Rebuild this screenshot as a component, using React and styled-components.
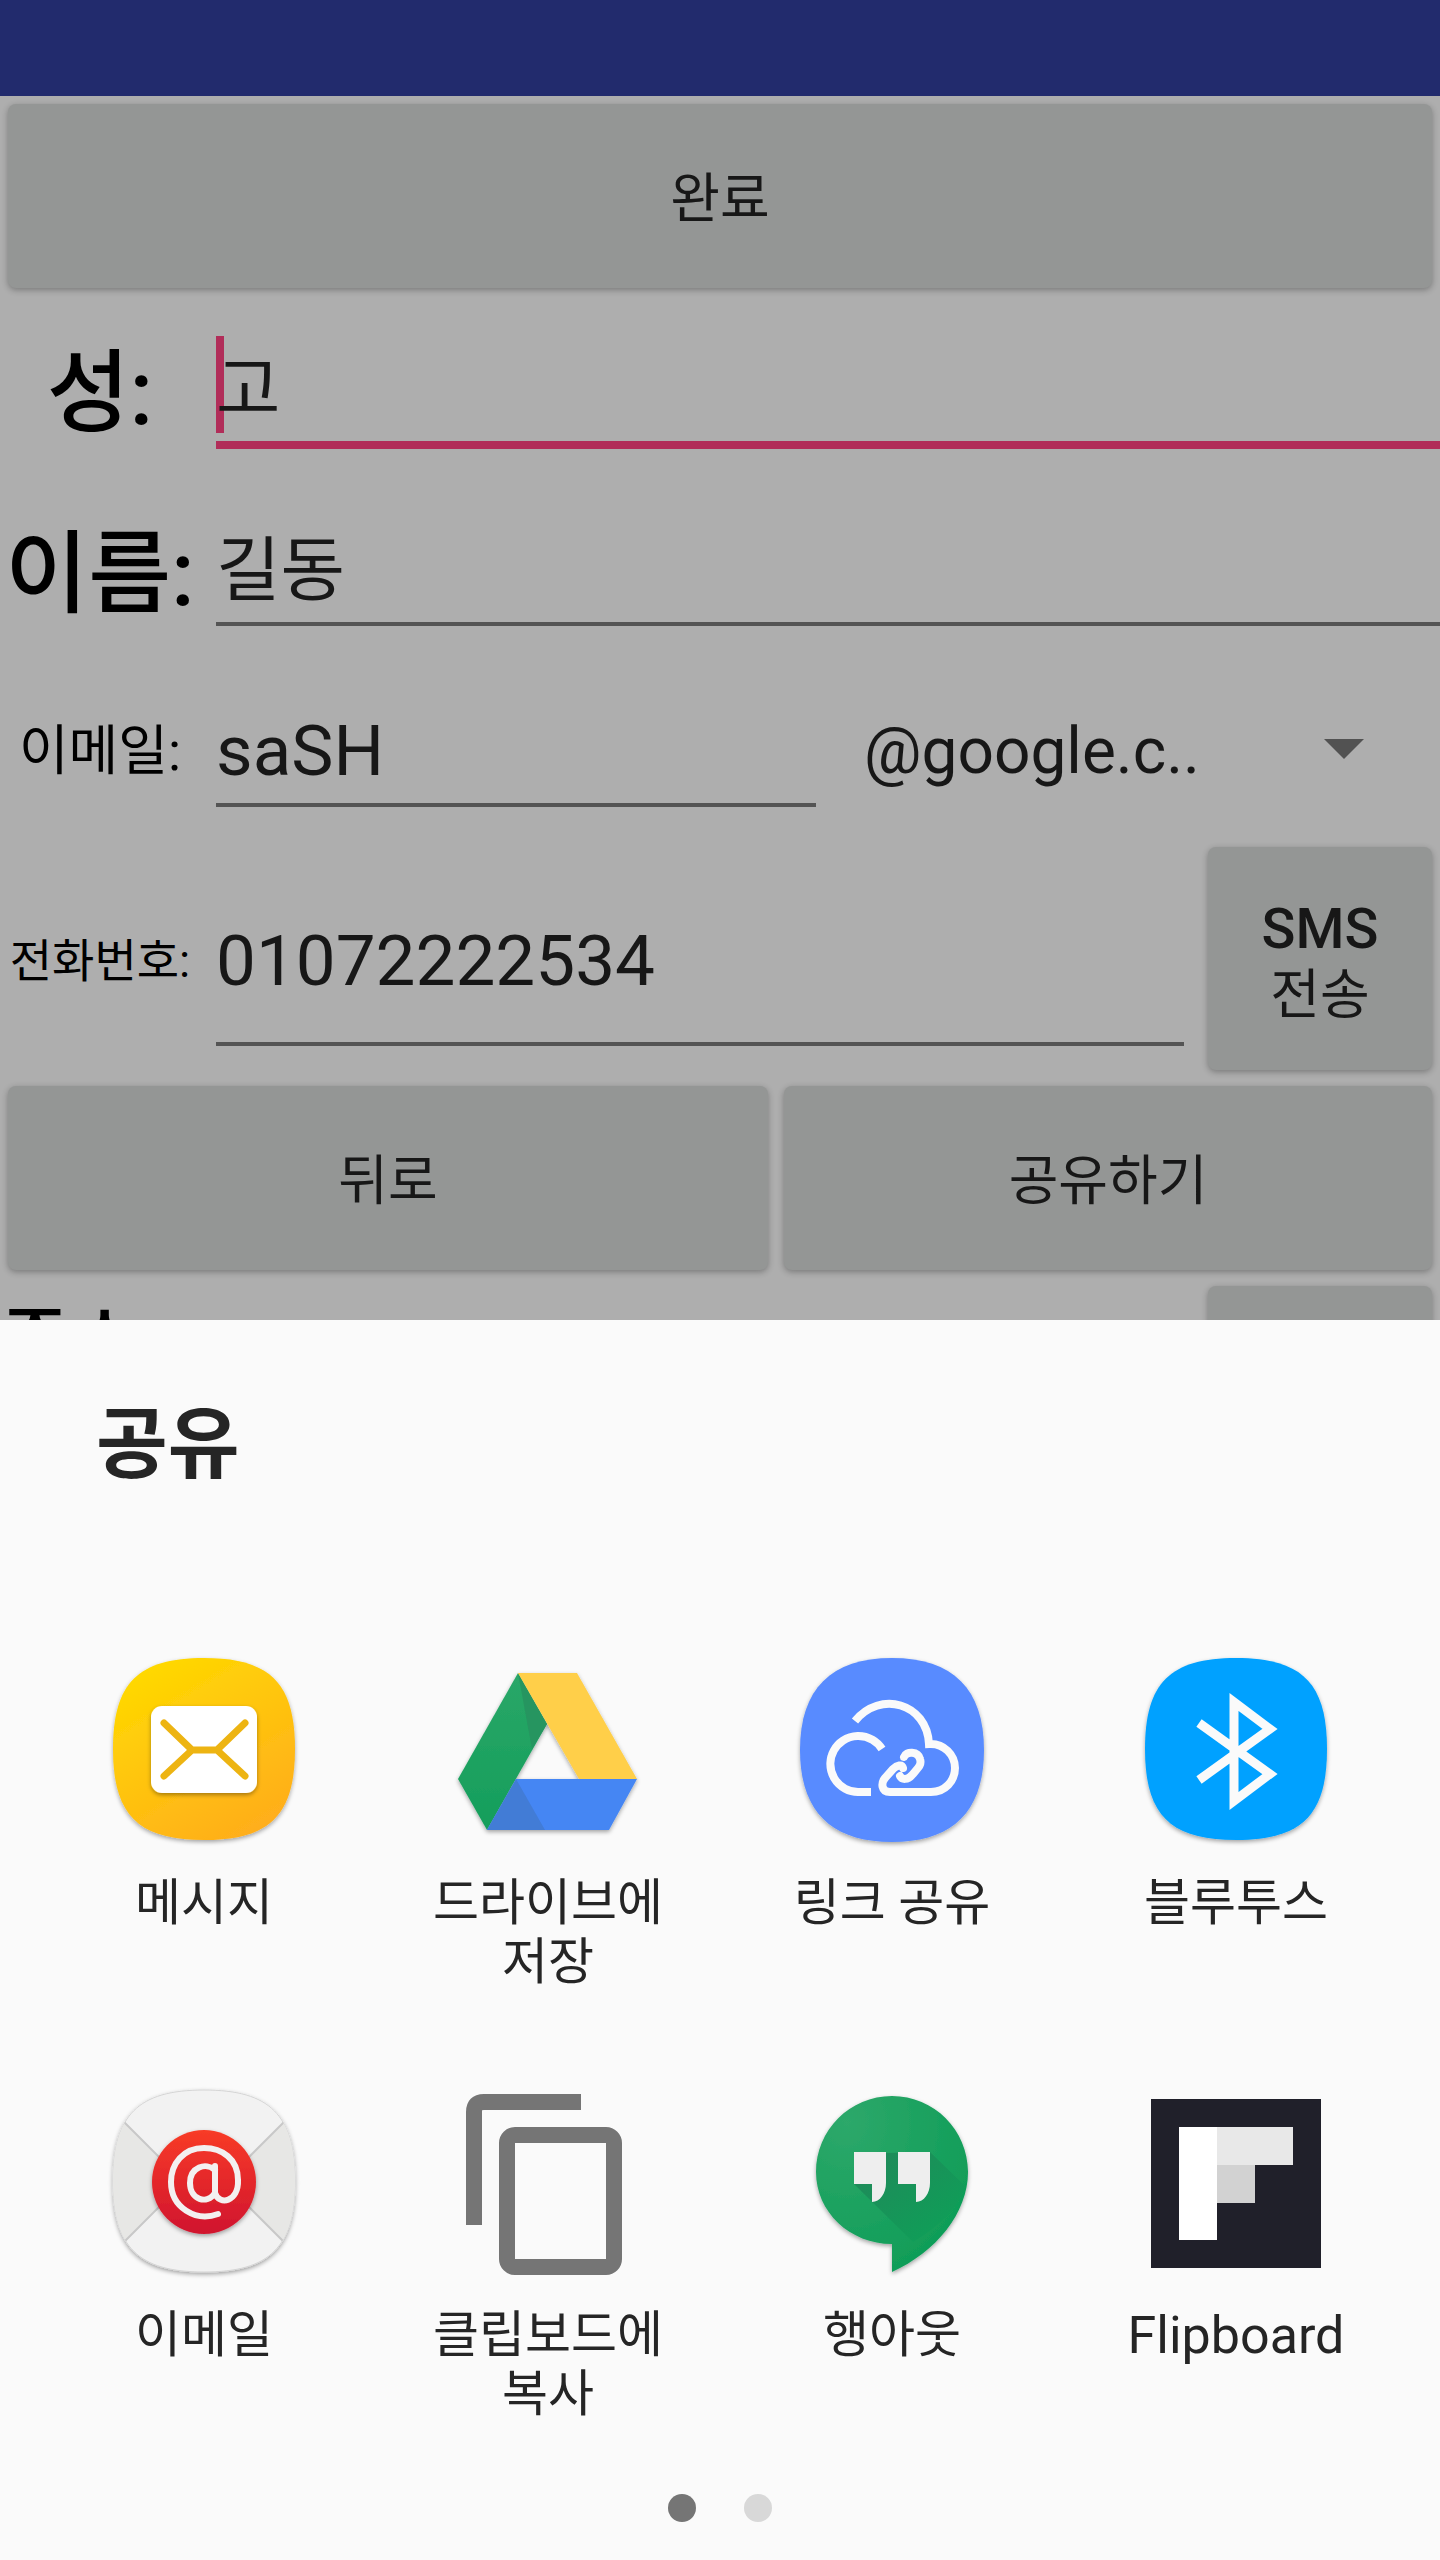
import React from 'react';
import styled, { createGlobalStyle, css } from 'styled-components';

const Global = createGlobalStyle`
  *, *::before, *::after { box-sizing: border-box; }
  body { margin: 0; background: #fafafa; }
  button, input, select { font: inherit; color: inherit; }
`;

const Screen = styled.div`
  display: flex;
  flex-direction: column;
  height: 100vh;
  background: #aeaeae;
  color: #171717;
  font-family: Roboto, 'Noto Sans CJK KR', sans-serif;
`;

const StatusBar = styled.header`
  flex: none;
  height: 96px;
  background: #222b6d;
`;

const Form = styled.form`
  flex: 1 1 0;
  min-height: 0;
  overflow: hidden;
`;

const Row = styled.div`
  display: flex;
  align-items: stretch;
  height: ${(p) => p.$height || 181}px;
`;

const ButtonRow = styled.div`
  display: flex;
  gap: 16px;
  height: 200px;
  padding: 8px;
`;

const FormButton = styled.button`
  flex: ${(p) => p.$grow || 1} 1 0;
  padding: 8px 0 0;
  border: 0;
  border-radius: 8px;
  background: #949695;
  box-shadow: 0 2px 6px rgba(0, 0, 0, 0.3);
  font-size: 54px;
  line-height: 66px;
`;

const SideButton = styled(FormButton)`
  flex: none;
  width: 224px;
  margin: 8px 8px 8px 24px;
`;

const Latin = styled.span`
  font-size: 56px;
  font-weight: 500;
`;

const Label = styled.label`
  flex: none;
  display: flex;
  align-items: center;
  justify-content: ${(p) => (p.$start ? 'flex-start' : 'center')};
  width: 200px;
  padding-bottom: 4px;
  color: #000;
  font-size: ${(p) => p.$size}px;
  font-weight: ${(p) => (p.$size > 60 ? 500 : 400)};
  white-space: nowrap;
`;

const Field = styled.div`
  position: relative;
  flex: 25 1 0;
  min-width: 0;
  display: flex;
  margin: 0 0 ${(p) => (p.$focused ? 28 : 32)}px 16px;
`;

const TextInput = styled.input`
  position: relative;
  width: 100%;
  min-width: 0;
  padding: ${(p) => (p.$latin ? 40 : 30)}px 0 0;
  border: 0;
  border-bottom: 4px solid #545454;
  border-radius: 0;
  outline: 0;
  background: transparent;
  font-size: ${(p) => (p.$latin ? 71 : 70)}px;
  ${(p) => p.$focused && css`
    border-bottom: 8px solid #b12d59;
  `}
`;

const Caret = styled.span`
  position: absolute;
  left: 0;
  top: 40px;
  width: 8px;
  height: 97px;
  background: #b12d59;
`;

const Picker = styled.div`
  flex: 26 1 0;
  min-width: 0;
  display: flex;
  align-items: center;
`;

const Select = styled.select`
  flex: 1;
  min-width: 0;
  padding: 6px 0 0 48px;
  border: 0;
  outline: 0;
  background: transparent;
  appearance: none;
  font-size: 64px;
`;

const Arrow = styled.svg`
  flex: none;
  width: 40px;
  height: 20px;
  margin-right: 76px;
`;

const Sheet = styled.section`
  flex: none;
  background: #fafafa;
  color: #252525;
`;

const Title = styled.h1`
  margin: 0;
  padding: 78px 96px 0;
  font-size: 78px;
  line-height: 96px;
  font-weight: 700;
`;

const Targets = styled.div`
  display: grid;
  grid-template-columns: repeat(4, 1fr);
  row-gap: 32px;
  padding: 152px 32px 0;
`;

const Target = styled.button`
  display: flex;
  flex-direction: column;
  align-items: center;
  height: 400px;
  padding: 0;
  border: 0;
  background: none;
  font-size: ${(p) => (p.$latin ? 52 : 50)}px;
  line-height: 59px;
`;

const TargetIcon = styled.svg`
  display: block;
  width: 208px;
  height: 208px;
  margin-bottom: 20px;
`;

const TargetName = styled.span`
  max-width: 250px;
  word-break: keep-all;
`;

const Pages = styled.nav`
  display: flex;
  justify-content: center;
  gap: 48px;
  padding: 16px 0 38px;
`;

const PageDot = styled.button`
  width: 28px;
  height: 28px;
  padding: 0;
  border: 0;
  border-radius: 50%;
  background: ${(p) => (p.$active ? '#757575' : '#d8d8d8')};
`;

/* Rounded tiles shared by the stock app icons, centred in a 208 box */
const TILE = 'M104 12C170 12 195 37 195 103C195 169 170 194 104 194C38 194 13 169 13 103C13 37 38 12 104 12Z';
const WIDE_TILE = 'M104 12C165 12 196 43 196 104C196 165 165 196 104 196C43 196 12 165 12 104C12 43 43 12 104 12Z';

const Shadow = ({ id }) => (
  <filter id={id} x="-10%" y="-10%" width="120%" height="125%">
    <feDropShadow dx="0" dy="2" stdDeviation="2" floodColor="#000" floodOpacity="0.35" />
  </filter>
);

const Message = () => (
  <TargetIcon viewBox="0 0 208 208" aria-hidden="true">
    <defs>
      <Shadow id="ms" />
      <linearGradient id="mg" x1="0.2" y1="0" x2="0.8" y2="1">
        <stop offset="0" stopColor="#ffda00" />
        <stop offset="1" stopColor="#ffac1c" />
      </linearGradient>
    </defs>
    <path d={TILE} fill="url(#mg)" filter="url(#ms)" />
    <rect x="51" y="60" width="106" height="87" rx="11" fill="#fff" filter="url(#ms)" />
    <path d="M64 77L92 104L64 130M145 77L117 104L145 130M92 104H117" fill="none" stroke="#edb412" strokeWidth="7" strokeLinecap="round" />
  </TargetIcon>
);

const Drive = () => (
  <TargetIcon viewBox="0 0 208 208" aria-hidden="true">
    <defs>
      <Shadow id="ds" />
      <linearGradient id="dg" x1="0" y1="0" x2="0" y2="1">
        <stop offset="0" stopColor="#2aa768" />
        <stop offset="1" stopColor="#149e5b" />
      </linearGradient>
    </defs>
    <g filter="url(#ds)">
      <path d="M74 27L103 78L43 184L14 133Z" fill="url(#dg)" />
      <path d="M74 27L103 78L88 103Z" fill="#269560" />
      <path d="M74 27H133L193 133H135Z" fill="#ffcf4a" />
      <path d="M72 133H193L165 184H43Z" fill="#4586f3" />
      <path d="M72 133L101 184H43Z" fill="#427bd6" />
    </g>
  </TargetIcon>
);

const LinkShare = () => (
  <TargetIcon viewBox="0 0 208 208" aria-hidden="true">
    <defs><Shadow id="ls" /></defs>
    <path d={WIDE_TILE} fill="#588bff" filter="url(#ls)" />
    <g fill="none" stroke="#fafafa" strokeWidth="8">
      <path d="M67 75C92 44 139 57 141 98C156 97 167 109 167 122C167 135 157 146 143 146H102" />
      <path d="M102 146C93 146 93 137 97 132L105 123C109 119 114 118 115 122" strokeLinecap="round" />
      <path d="M94 103A28 28 0 1 0 70 146H83" />
      <path d="M116 111C118 105 130 105 132 113C134 119 130 122 124 129C120 134 114 134 112 130" strokeLinecap="round" />
    </g>
  </TargetIcon>
);

const Bluetooth = () => (
  <TargetIcon viewBox="0 0 208 208" aria-hidden="true">
    <defs><Shadow id="bs" /></defs>
    <path d={TILE} fill="#00a1ff" filter="url(#bs)" />
    <path d="M67 77L138 128L102 155V56L138 83L67 134" fill="none" stroke="#fafafa" strokeWidth="9" />
  </TargetIcon>
);

const Email = () => (
  <TargetIcon viewBox="0 0 208 208" aria-hidden="true">
    <defs>
      <Shadow id="es" />
      <linearGradient id="eg" x1="0" y1="0" x2="0" y2="1">
        <stop offset="0" stopColor="#f83b27" />
        <stop offset="1" stopColor="#d0142f" />
      </linearGradient>
      <clipPath id="ec"><path d={TILE} /></clipPath>
    </defs>
    <path d={TILE} fill="#f2f2f2" stroke="#d5d5d5" filter="url(#es)" />
    <g clipPath="url(#ec)">
      <path d="M10 30L84 104L10 178ZM198 30L124 104L198 178Z" fill="#e7e7e5" />
      <path d="M23 43L84 104L23 165M185 43L124 104L185 165" fill="none" stroke="#c8c8c8" strokeWidth="2" />
    </g>
    <circle cx="104" cy="104" r="52" fill="url(#eg)" filter="url(#es)" />
    <path d="M115 88V115C119 128 139 124 138 102C138 81 122 70 104 70C83 70 71 86 71 104C71 130 96 144 118 136M115 92C106 84 90 89 90 105C90 122 107 127 115 115" fill="none" stroke="#f3f0f0" strokeWidth="6" strokeLinecap="round" />
  </TargetIcon>
);

const Copy = () => (
  <TargetIcon viewBox="0 0 208 208" aria-hidden="true">
    <path d="M137 24H40C33 24 30 27 30 34V147" fill="none" stroke="#757575" strokeWidth="16" />
    <rect x="63" y="57" width="107" height="132" rx="8" fill="none" stroke="#757575" strokeWidth="16" />
  </TargetIcon>
);

const Hangouts = () => (
  <TargetIcon viewBox="0 0 208 208" aria-hidden="true">
    <defs>
      <Shadow id="hs" />
      <radialGradient id="hg" cx="0.2" cy="0.15" r="0.9">
        <stop offset="0" stopColor="#2da86a" />
        <stop offset="1" stopColor="#109d58" />
      </radialGradient>
      <linearGradient id="hh" x1="0" y1="0" x2="1" y2="1">
        <stop offset="0" stopColor="#22875a" />
        <stop offset="0.8" stopColor="#109d58" />
      </linearGradient>
    </defs>
    <path d="M104 18C146 18 180 52 180 94C180 135 148 174 104 194V166C62 166 28 134 28 94C28 52 62 18 104 18Z" fill="url(#hg)" filter="url(#hs)" />
    <path d="M66 106L125 164C155 146 172 127 177 108L142 74L98 75Z" fill="url(#hh)" />
    <path d="M66 74H98V105C98 115 92 124 84 124V106H66ZM110 74H142V105C142 115 136 124 128 124V106H110Z" fill="#eee" />
  </TargetIcon>
);

const Flipboard = () => (
  <TargetIcon viewBox="0 0 208 208" aria-hidden="true">
    <path d="M19 21H189V190H19Z" fill="#20202a" />
    <path d="M47 49H85V162H47Z" fill="#fff" />
    <path d="M85 49H161V87H85Z" fill="#e8e8e8" />
    <path d="M85 87H123V125H85Z" fill="#d2d2d2" />
  </TargetIcon>
);

const targets = [
  { Icon: Message, name: '메시지' },
  { Icon: Drive, name: '드라이브에 저장' },
  { Icon: LinkShare, name: '링크 공유' },
  { Icon: Bluetooth, name: '블루투스' },
  { Icon: Email, name: '이메일' },
  { Icon: Copy, name: '클립보드에 복사' },
  { Icon: Hangouts, name: '행아웃' },
  { Icon: Flipboard, name: 'Flipboard', latin: true },
];

export default function App() {
  return (
    <>
      <Global />
      <Screen>
        <StatusBar />
        <Form onSubmit={(e) => e.preventDefault()}>
          <ButtonRow>
            <FormButton type="button">완료</FormButton>
          </ButtonRow>
          <Row>
            <Label htmlFor="family" $size={90}>성:</Label>
            <Field $focused>
              <Caret />
              <TextInput id="family" defaultValue="고" $focused />
            </Field>
          </Row>
          <Row>
            <Label htmlFor="given" $size={90}>이름:</Label>
            <Field><TextInput id="given" defaultValue="길동" /></Field>
          </Row>
          <Row>
            <Label htmlFor="email" $size={54}>이메일:</Label>
            <Field><TextInput id="email" defaultValue="saSH" $latin /></Field>
            <Picker>
              <Select aria-label="이메일 도메인" defaultValue="google">
                <option value="google">@google.c..</option>
              </Select>
              <Arrow viewBox="0 0 40 20" aria-hidden="true">
                <path d="M0 0H40L20 20Z" fill="#525252" />
              </Arrow>
            </Picker>
          </Row>
          <Row $height={239}>
            <Label htmlFor="phone" $size={46}>전화번호:</Label>
            <Field><TextInput id="phone" type="tel" defaultValue="01072222534" $latin /></Field>
            <SideButton type="button"><Latin>SMS</Latin><br />전송</SideButton>
          </Row>
          <ButtonRow>
            <FormButton type="button" $grow={760}>뒤로</FormButton>
            <FormButton type="button" $grow={648}>공유하기</FormButton>
          </ButtonRow>
          <Row $height={120}>
            <Label htmlFor="address" $size={76} $start>주소:</Label>
            <Field><TextInput id="address" /></Field>
            <SideButton type="button" aria-label="주소" />
          </Row>
        </Form>
        <Sheet>
          <Title>공유</Title>
          <Targets>
            {targets.map(({ Icon, name, latin }) => (
              <Target key={name} type="button" $latin={latin}>
                <Icon />
                <TargetName>{name}</TargetName>
              </Target>
            ))}
          </Targets>
          <Pages>
            <PageDot type="button" aria-label="1" $active />
            <PageDot type="button" aria-label="2" />
          </Pages>
        </Sheet>
      </Screen>
    </>
  );
}
